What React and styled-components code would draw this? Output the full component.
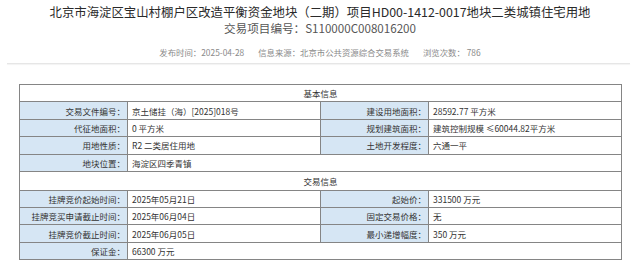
import React from "react";
import styled, { createGlobalStyle } from "styled-components";

const Global = createGlobalStyle`
  html, body { margin: 0; padding: 0; background: #fff; }
  body { font-family: "Noto Sans CJK SC", "Noto Sans", sans-serif; color: #333; }
`;

const Page = styled.div`
  width: 640px;
  display: flex;
  flex-direction: column;
  align-items: center;
`;

const Title = styled.h1`
  margin: 4px 0 0;
  font-size: 12.4px;
  line-height: 17px;
  font-weight: 400;
  color: #2a2a2a;
  white-space: nowrap;
`;

const SubTitle = styled.div`
  margin-top: 0;
  font-size: 11.6px;
  line-height: 15px;
  color: #555;
  white-space: nowrap;
`;

const Meta = styled.div`
  margin-top: 10px;
  display: flex;
  gap: 14px;
  font-size: 8.4px;
  line-height: 12px;
  color: #8a8a8a;
  white-space: nowrap;
`;

const Divider = styled.div`
  align-self: stretch;
  margin: 5px 10px 0 7px;
  height: 1px;
  background: #e6e6e6;
  box-shadow: 0 1px 1px #f2f2f2;
`;

const Table = styled.table`
  margin-top: 20px;
  margin-left: 1px;
  width: 602px;
  border-collapse: collapse;
  table-layout: fixed;
  font-size: 8.5px;
  color: #333;
`;

const Row = styled.tr`
  height: ${(p) => (p.$section ? 18.6 : 17.4)}px;
`;

const Cell = styled.td`
  border: 1px solid #858585;
  padding: 0 4px;
  height: inherit;
  box-sizing: border-box;
  white-space: nowrap;
  overflow: hidden;
  line-height: 12px;
  text-align: ${(p) => (p.$label ? "right" : p.$center ? "center" : "left")};
  background: ${(p) => (p.$label ? "#d6e6f4" : "#fff")};
  ${(p) => p.$label && "padding-right: 2px;"}
`;

const basic = [
  ["交易文件编号：", "京土储挂（海）[2025]018号", "建设用地面积：", "28592.77 平方米"],
  ["代征地面积：", "0 平方米", "规划建筑面积：", "建筑控制规模 ≤60044.82平方米"],
  ["用地性质：", "R2 二类居住用地", "土地开发程度：", "六通一平"],
  ["地块位置：", "海淀区四季青镇"],
];

const trade = [
  ["挂牌竞价起始时间：", "2025年05月21日", "起始价：", "331500 万元"],
  ["挂牌竞买申请截止时间：", "2025年06月04日", "固定交易价格：", "无"],
  ["挂牌竞价截止时间：", "2025年06月05日", "最小递增幅度：", "350 万元"],
  ["保证金：", "66300 万元"],
];

function Rows({ data }) {
  return data.map((r, i) => (
    <Row key={i}>
      <Cell $label>{r[0]}</Cell>
      {r.length > 2 ? (
        <>
          <Cell>{r[1]}</Cell>
          <Cell $label>{r[2]}</Cell>
          <Cell>{r[3]}</Cell>
        </>
      ) : (
        <Cell colSpan={3}>{r[1]}</Cell>
      )}
    </Row>
  ));
}

export default function App() {
  return (
    <>
      <Global />
      <Page>
        <Title>北京市海淀区宝山村棚户区改造平衡资金地块（二期）项目HD00-1412-0017地块二类城镇住宅用地</Title>
        <SubTitle>交易项目编号：S110000C008016200</SubTitle>
        <Meta>
          <span>发布时间：2025-04-28</span>
          <span>信息来源：北京市公共资源综合交易系统</span>
          <span>浏览次数： 786</span>
        </Meta>
        <Divider />
        <Table>
          <colgroup>
            <col style={{ width: 108 }} />
            <col style={{ width: 193 }} />
            <col style={{ width: 108 }} />
            <col style={{ width: 193 }} />
          </colgroup>
          <tbody>
            <Row>
              <Cell colSpan={4} $center>基本信息</Cell>
            </Row>
            <Rows data={basic} />
            <Row $section>
              <Cell colSpan={4} $center>交易信息</Cell>
            </Row>
            <Rows data={trade} />
          </tbody>
        </Table>
      </Page>
    </>
  );
}
